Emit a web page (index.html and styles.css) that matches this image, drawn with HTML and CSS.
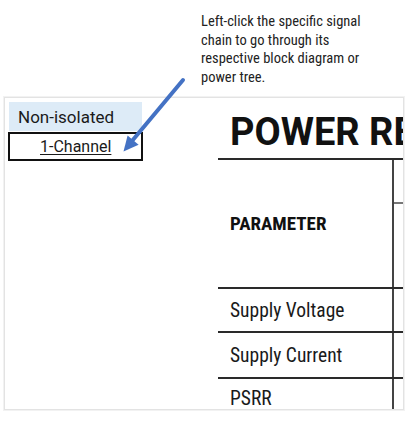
FILE: index.html
```html
<!DOCTYPE html>
<html>
<head>
<meta charset="utf-8">
<link rel="stylesheet" href="styles.css">
</head>
<body>
<div class="note">Left-click the specific signal<br>chain to go through its<br>respective block diagram or<br>power tree.</div>
<div class="sheet">
  <div class="nav">
    <div class="cell-group">Non-isolated</div>
    <div class="cell-link"><a href="#">1-Channel</a></div>
  </div>
  <div class="doc">
    <div class="title">POWER RE</div>
    <div class="row row-head">
      <div class="c1 bold">PARAMETER</div>
      <div class="c2"><div class="sub"></div></div>
    </div>
    <div class="row r1">
      <div class="c1">Supply Voltage</div>
      <div class="c2"></div>
    </div>
    <div class="row r2">
      <div class="c1">Supply Current</div>
      <div class="c2"></div>
    </div>
    <div class="row r3">
      <div class="c1">PSRR</div>
      <div class="c2"></div>
    </div>
  </div>
</div>
<svg class="arrow" width="414" height="425" viewBox="0 0 414 425">
  <line x1="183" y1="80" x2="132" y2="141" stroke="#4472c4" stroke-width="4" stroke-linecap="round"/>
  <polygon points="123.5,151.5 127.6,135.5 138.6,144.7" fill="#4472c4"/>
</svg>
</body>
</html>
```
FILE: styles.css
```css
html, body {
  margin: 0;
  padding: 0;
  background: #fff;
}
body {
  width: 414px;
  height: 425px;
  overflow: hidden;
  position: relative;
  font-family: "Roboto Condensed", Roboto, sans-serif;
  color: #1a1a1a;
}
.note {
  padding: 13px 0 0 201px;
  height: 97px;
  box-sizing: border-box;
  font-size: 14.5px;
  line-height: 18.7px;
  color: #222;
  white-space: nowrap;
}
.sheet {
  margin-left: 4px;
  width: 400px;
  height: 313px;
  box-sizing: border-box;
  border: 1px solid #e3e3e3;
  box-shadow: 0 0 0 1px #f2f2f2;
  display: flex;
  overflow: hidden;
}
.nav {
  width: 213px;
  flex: none;
  padding: 4px 0 0 3px;
  box-sizing: border-box;
  font-family: Roboto, sans-serif;
  font-size: 16px;
}
.cell-group {
  margin-left: 1px;
  width: 133px;
  height: 29px;
  background: #ddebf7;
  box-sizing: border-box;
  padding: 5px 0 0 9px;
  font-size: 17px;
  color: #1a1a1a;
}
.cell-link {
  margin-top: 1px;
  width: 135px;
  height: 29px;
  box-sizing: border-box;
  border: 2px solid #111;
  padding: 3px 0 0 30px;
}
.cell-link a {
  color: #1a1a1a;
  text-decoration: underline;
  text-underline-offset: 2px;
  text-decoration-thickness: 1px;
}
.doc {
  flex: 1;
  min-width: 0;
  overflow: hidden;
}
.title {
  height: 62px;
  box-sizing: border-box;
  border-bottom: 2px solid #2a2a2a;
  padding: 11px 0 0 12px;
  font-family: Roboto, sans-serif;
  font-size: 38px;
  line-height: 46px;
  font-weight: 700;
  color: #111;
  white-space: nowrap;
  overflow: hidden;
}
.row {
  display: grid;
  grid-template-columns: 174px 1fr;
  border-bottom: 2px solid #2a2a2a;
}
.c1 {
  padding-left: 12px;
  display: flex;
  align-items: center;
  font-size: 19.5px;
  white-space: nowrap;
}
.c2 {
  border-left: 2px solid #444;
}
.bold {
  font-weight: 700;
  font-size: 19px;
  color: #111;
}
.row-head {
  height: 127px;
}
.sub {
  height: 42px;
  border-bottom: 2px solid #777;
}
.r1 {
  height: 42px;
}
.r2 {
  height: 44px;
}
.r3 {
  height: 48px;
  border-bottom: none;
}
.r3 .c1 {
  align-items: flex-start;
  padding-top: 8px;
}
.arrow {
  position: absolute;
  left: 0;
  top: 0;
  pointer-events: none;
}
```
